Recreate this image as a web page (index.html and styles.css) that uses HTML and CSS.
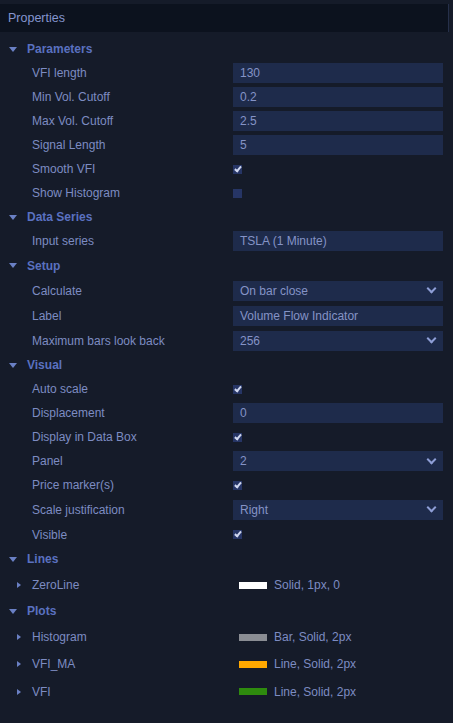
FILE: index.html
```html
<!DOCTYPE html>
<html lang="en">
<head>
    <meta charset="UTF-8">
    <meta name="viewport" content="width=device-width, initial-scale=1.0">
    <link rel="stylesheet" href="styles.css">
    <title>Properties</title>
</head>
<body>
    <div class="panel">
        <div class="header">Properties</div>

        <!-- Parameters -->
        <div class="section-title"><span class="caret-down"></span>Parameters</div>
        <div class="row"><span class="label">VFI length</span><div class="value"><div class="box">130</div></div></div>
        <div class="row"><span class="label">Min Vol. Cutoff</span><div class="value"><div class="box">0.2</div></div></div>
        <div class="row"><span class="label">Max Vol. Cutoff</span><div class="value"><div class="box">2.5</div></div></div>
        <div class="row"><span class="label">Signal Length</span><div class="value"><div class="box">5</div></div></div>
        <div class="row"><span class="label">Smooth VFI</span><div class="value"><span class="check on"></span></div></div>
        <div class="row"><span class="label">Show Histogram</span><div class="value"><span class="check"></span></div></div>

        <!-- Data Series -->
        <div class="section-title"><span class="caret-down"></span>Data Series</div>
        <div class="row"><span class="label">Input series</span><div class="value"><div class="box">TSLA (1 Minute)</div></div></div>

        <!-- Setup -->
        <div class="section-title tall"><span class="caret-down"></span>Setup</div>
        <div class="row tall"><span class="label">Calculate</span><div class="value"><div class="box select">On bar close<span class="chev"></span></div></div></div>
        <div class="row tall"><span class="label">Label</span><div class="value"><div class="box">Volume Flow Indicator</div></div></div>
        <div class="row tall"><span class="label">Maximum bars look back</span><div class="value"><div class="box select">256<span class="chev"></span></div></div></div>

        <!-- Visual -->
        <div class="section-title"><span class="caret-down"></span>Visual</div>
        <div class="row"><span class="label">Auto scale</span><div class="value"><span class="check on"></span></div></div>
        <div class="row"><span class="label">Displacement</span><div class="value"><div class="box">0</div></div></div>
        <div class="row"><span class="label">Display in Data Box</span><div class="value"><span class="check on"></span></div></div>
        <div class="row"><span class="label">Panel</span><div class="value"><div class="box select">2<span class="chev"></span></div></div></div>
        <div class="row"><span class="label">Price marker(s)</span><div class="value"><span class="check on"></span></div></div>
        <div class="row tall"><span class="label">Scale justification</span><div class="value"><div class="box select">Right<span class="chev"></span></div></div></div>
        <div class="row tall"><span class="label">Visible</span><div class="value"><span class="check on"></span></div></div>

        <!-- Lines -->
        <div class="section-title"><span class="caret-down"></span>Lines</div>
        <div class="row plot"><span class="label"><span class="caret-right"></span>ZeroLine</span><div class="value"><span class="swatch white"></span>Solid, 1px, 0</div></div>

        <!-- Plots -->
        <div class="section-title"><span class="caret-down"></span>Plots</div>
        <div class="row plot"><span class="label"><span class="caret-right"></span>Histogram</span><div class="value"><span class="swatch grey"></span>Bar, Solid, 2px</div></div>
        <div class="row plot-mid"><span class="label"><span class="caret-right"></span>VFI_MA</span><div class="value"><span class="swatch orange"></span>Line, Solid, 2px</div></div>
        <div class="row plot-last"><span class="label"><span class="caret-right"></span>VFI</span><div class="value"><span class="swatch green"></span>Line, Solid, 2px</div></div>
    </div>
</body>
</html>
```

FILE: styles.css
```css
body {
    margin: 0;
    background-color: #151b29;
    font-family: 'Liberation Sans', Arial, sans-serif;
    font-size: 12px;
    color: #7d8cc2;
}

.panel {
    width: 453px;
    height: 723px;
    padding-top: 4px;
    box-sizing: border-box;
}

.header {
    height: 28px;
    line-height: 28px;
    margin-right: 4px;
    padding-left: 8px;
    background-color: #0c121e;
    border-right: 1px solid #26304a;
    font-size: 12.5px;
    color: #8595cf;
}

.section-title {
    display: flex;
    align-items: center;
    height: 24px;
    font-weight: bold;
    color: #5a71c0;
}

.header + .section-title {
    margin-top: 5px;
}

.caret-down {
    width: 0;
    height: 0;
    margin: 0 10px 0 9px;
    border-left: 4px solid transparent;
    border-right: 4px solid transparent;
    border-top: 5px solid #6a80c4;
}

.caret-right {
    display: inline-block;
    width: 0;
    height: 0;
    margin: 0 11px 0 -15px;
    border-top: 3.5px solid transparent;
    border-bottom: 3.5px solid transparent;
    border-left: 4px solid #6a80c4;
    vertical-align: 1px;
}

.row {
    display: flex;
    align-items: center;
    height: 24px;
}

.tall {
    height: 25px;
}

.plot {
    height: 28px;
}

.plot-mid {
    height: 26px;
}

.plot-last {
    height: 29px;
}

.label {
    width: 201px;
    padding-left: 32px;
    white-space: nowrap;
}

.value {
    display: flex;
    align-items: center;
    flex: 1;
    padding-right: 10px;
}

.box {
    display: flex;
    align-items: center;
    justify-content: space-between;
    width: 100%;
    height: 20px;
    padding: 0 8px 0 7px;
    background-color: #1e2b4b;
    color: #8593c6;
    box-sizing: border-box;
}

.chev {
    width: 5px;
    height: 5px;
    margin-top: -4px;
    border-right: 2px solid #8e9ed6;
    border-bottom: 2px solid #8e9ed6;
    transform: rotate(45deg);
}

.check {
    position: relative;
    width: 9px;
    height: 9px;
    background-color: #263565;
}

.check.on::after {
    content: "";
    position: absolute;
    left: 3px;
    top: 0;
    width: 2px;
    height: 5px;
    border-right: 2px solid #d0d8f0;
    border-bottom: 2px solid #d0d8f0;
    transform: rotate(40deg);
}

.swatch {
    width: 28px;
    height: 7px;
    margin: 0 7px 0 6px;
}

.white { background-color: #ffffff; }
.grey { background-color: #8a8d93; }
.orange { background-color: #ffa800; }
.green { background-color: #2e8b0e; }
```
